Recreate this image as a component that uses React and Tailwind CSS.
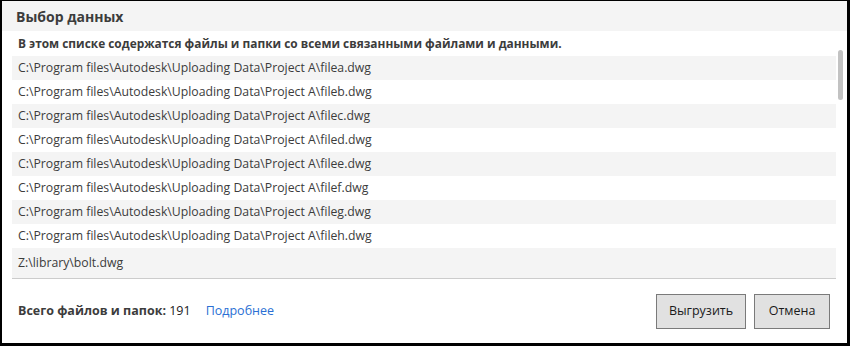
import React from 'react';

const files = [
  'C:\\Program files\\Autodesk\\Uploading Data\\Project A\\filea.dwg',
  'C:\\Program files\\Autodesk\\Uploading Data\\Project A\\fileb.dwg',
  'C:\\Program files\\Autodesk\\Uploading Data\\Project A\\filec.dwg',
  'C:\\Program files\\Autodesk\\Uploading Data\\Project A\\filed.dwg',
  'C:\\Program files\\Autodesk\\Uploading Data\\Project A\\filee.dwg',
  'C:\\Program files\\Autodesk\\Uploading Data\\Project A\\filef.dwg',
  'C:\\Program files\\Autodesk\\Uploading Data\\Project A\\fileg.dwg',
  'C:\\Program files\\Autodesk\\Uploading Data\\Project A\\fileh.dwg',
  'Z:\\library\\bolt.dwg',
];

const App = () => {
  return (
    <div
      className="w-[850px] h-[346px] bg-black pt-px pl-[2px] pr-[3px] pb-[3px]"
      style={{ fontFamily: '"Open Sans", "Noto Sans", sans-serif' }}
    >
      <div className="w-full h-full bg-white flex flex-col text-[#3c3c3c]">
        <div className="h-[30px] bg-[#f4f4f4] flex items-center px-[14px]">
          <h3 className="text-[14px] font-bold text-[#3c3c3c]">Выбор данных</h3>
        </div>

        <div className="flex pl-[10px] pr-[2px]">
          <div className="flex-1 border-b border-[#cccccc]">
            <div className="h-[25px] flex items-center px-[6px] text-[11.9px] font-bold text-[#3c3c3c]">
              В этом списке содержатся файлы и папки со всеми связанными файлами и данными.
            </div>
            {files.map((f, i) => (
              <div
                key={f}
                className={`${i === files.length - 1 ? 'h-[30px]' : 'h-[24px]'} flex items-center px-[6px] text-[12.25px] text-[#3c3c3c] ${i % 2 === 0 ? 'bg-[#f4f4f4]' : 'bg-white'}`}
              >
                {f}
              </div>
            ))}
          </div>
          <div className="w-[9px] pl-[2px] pt-[19px]">
            <div className="w-[5px] h-[50px] rounded-full bg-[#c2c2c2]"></div>
          </div>
        </div>

        <div className="flex-1 flex items-center justify-between pl-[16px] pr-[17px] pt-[1px]">
          <div className="flex items-center gap-[15px] text-[12.5px]">
            <p>
              <span className="font-bold text-[#3c3c3c]">Всего файлов и папок:</span>
              <span className="text-[#222222]"> 191</span>
            </p>
            <a className="text-[#2a6fd4]">Подробнее</a>
          </div>
          <div className="flex gap-[8px] text-[12.5px] text-[#1a1a1a]">
            <button className="w-[90px] h-[35px] bg-[#e1e1e1] border border-[#7a7a7a]">Выгрузить</button>
            <button className="w-[76px] h-[35px] bg-[#e1e1e1] border border-[#7a7a7a]">Отмена</button>
          </div>
        </div>
      </div>
    </div>
  );
};

export default App;
